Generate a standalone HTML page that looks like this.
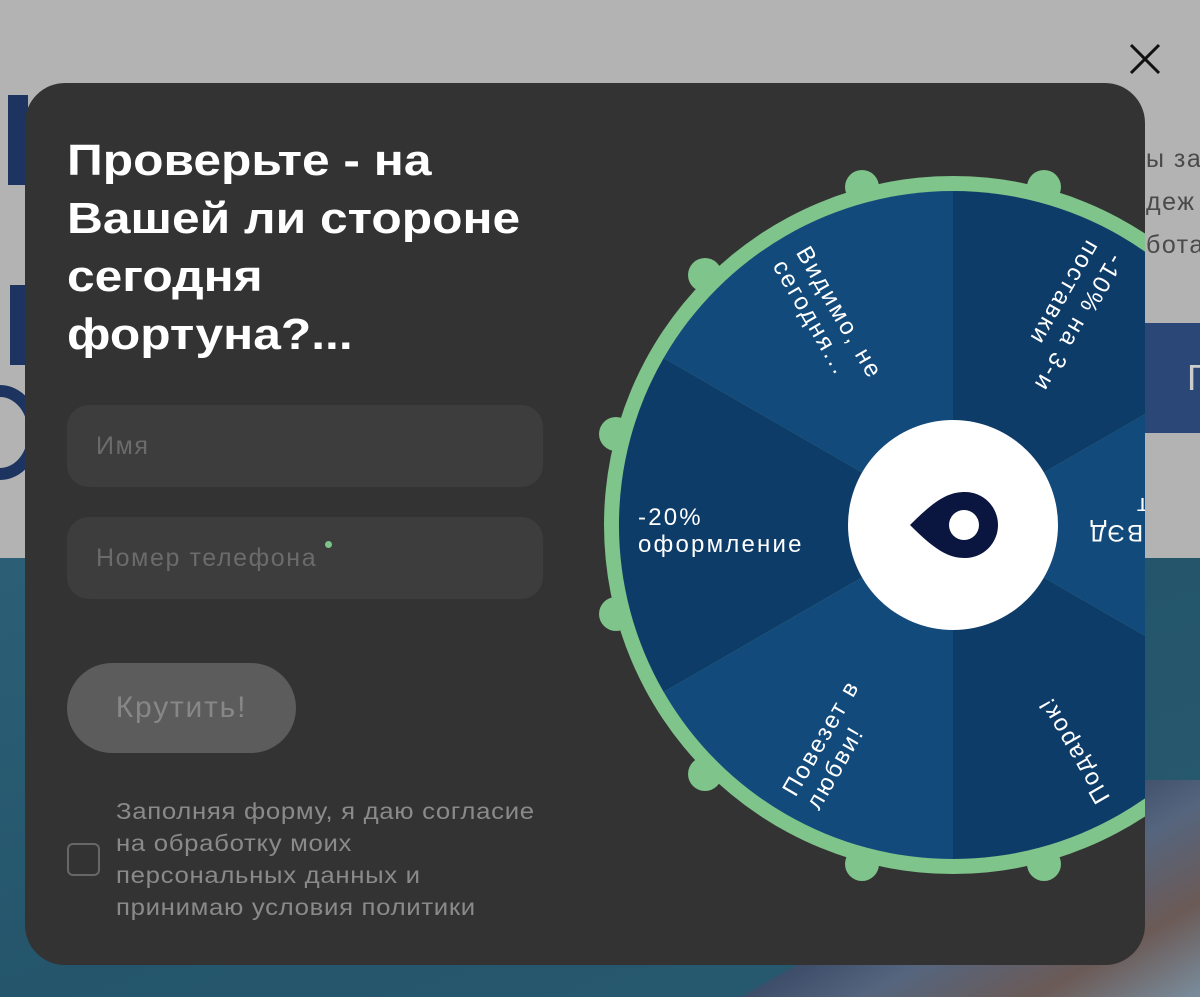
<!DOCTYPE html>
<html><head><meta charset="utf-8"><style>
html,body{margin:0;padding:0;width:1200px;height:997px;overflow:hidden;font-family:"Liberation Sans",sans-serif}
body{background:#b3b3b3;position:relative}
.ocean{position:absolute;left:0;top:558px;width:1200px;height:439px;background:linear-gradient(160deg,#2c5f76 0%,#24556b 50%,#285a70 100%)}
.ship{position:absolute;left:730px;top:780px;width:470px;height:220px;background:linear-gradient(150deg,transparent 45%,#3e4e6a 46%,#55657e 60%,#6b5a56 80%,#7a8fa0 100%)}
.modal{position:absolute;left:25px;top:83px;width:1120px;height:882px;background:#333333;border-radius:40px;overflow:hidden}
h1{position:absolute;left:42px;top:49px;margin:0;font-size:44px;line-height:58px;font-weight:bold;color:#fff;transform:scaleX(1.13);transform-origin:0 0;white-space:nowrap}
.inp{position:absolute;left:42px;width:476px;height:82px;background:#3d3d3d;border-radius:22px;color:#6b6b6b;font-size:25px;letter-spacing:1.6px;line-height:82px;padding-left:29px;box-sizing:border-box}
.btn{position:absolute;left:42px;top:580px;width:229px;height:90px;background:#5c5c5c;border-radius:45px;color:#878787;font-size:30px;letter-spacing:1.8px;line-height:90px;text-align:center}
.cb{position:absolute;left:42px;top:760px;width:33px;height:33px;border:2px solid #676767;border-radius:6px;box-sizing:border-box}
.terms{position:absolute;left:91px;top:712px;font-size:23px;letter-spacing:0.6px;line-height:32px;color:#8a8a8a;transform:scaleX(1.12);transform-origin:0 0;white-space:nowrap}
svg.wheel{position:absolute;left:-25px;top:-83px}
</style></head><body>
<div style="position:absolute;left:8px;top:95px;width:20px;height:90px;background:#1d3461"></div>
<div style="position:absolute;left:10px;top:285px;width:16px;height:80px;background:#1d3461"></div>
<div style="position:absolute;left:-40px;top:385px;width:80px;height:95px;border:12px solid #1d3461;border-radius:50%;box-sizing:border-box"></div>
<div style="position:absolute;left:1146px;top:138px;font-size:25px;letter-spacing:1.5px;line-height:43px;color:#4a4a4a">ы за<br>деж<br>бота</div>
<div style="position:absolute;left:1145px;top:323px;width:60px;height:110px;background:#2a4778;color:#ccc;font-size:36px;line-height:110px;padding-left:42px;box-sizing:border-box">Г</div>
<div class="ocean"></div>
<div class="ship"></div>
<svg style="position:absolute;left:1128px;top:42px" width="34" height="34" viewBox="0 0 34 34"><path d="M3 3L31 31M31 3L3 31" stroke="#111" stroke-width="3"/></svg>
<div class="modal">
<h1>Проверьте - на<br>Вашей ли стороне<br>сегодня<br>фортуна?...</h1>
<div class="inp" style="top:322px">Имя</div>
<div class="inp" style="top:434px">Номер телефона</div>
<div style="position:absolute;left:300px;top:458px;width:7px;height:7px;border-radius:50%;background:#7cc48a"></div>
<div class="btn">Крутить!</div>
<div class="cb"></div>
<div class="terms">Заполняя форму, я даю согласие<br>на обработку моих<br>персональных данных и<br>принимаю условия политики</div>
<svg class="wheel" width="1200" height="997" viewBox="0 0 1200 997" font-family="Liberation Sans, sans-serif">
<g fill="#7fc48a">
<circle cx="862" cy="187" r="17"/><circle cx="1044" cy="187" r="17"/>
<circle cx="705" cy="275" r="17"/><circle cx="616" cy="434" r="17"/>
<circle cx="616" cy="614" r="17"/><circle cx="705" cy="774" r="17"/>
<circle cx="862" cy="864" r="17"/><circle cx="1044" cy="864" r="17"/>
</g>
<circle cx="953" cy="525" r="349" fill="#7fc48a"/>
<path d="M953 525L953 191A334 334 0 0 0 663.7 358Z" fill="#124a7b"/>
<path d="M953 525L663.7 358A334 334 0 0 0 663.7 692Z" fill="#0e3c69"/>
<path d="M953 525L663.7 692A334 334 0 0 0 953 859Z" fill="#124a7b"/>
<path d="M953 525L953 859A334 334 0 0 0 1242.3 692Z" fill="#0e3c69"/>
<path d="M953 525L1242.3 692A334 334 0 0 0 1242.3 358Z" fill="#124a7b"/>
<path d="M953 525L1242.3 358A334 334 0 0 0 953 191Z" fill="#0e3c69"/>
<g fill="#fff" font-size="24" letter-spacing="2.2">
<g><text x="638" y="525">-20%</text><text x="638" y="552">оформление</text></g>
<g transform="rotate(60 953 525)"><text x="638" y="525">Видимо, не</text><text x="638" y="552">сегодня...</text></g>
<g transform="rotate(120 953 525)"><text x="638" y="525">-10% на 3-и</text><text x="638" y="552">поставки</text></g>
<g transform="rotate(180 953 525)"><text x="638" y="525">Аудит по ВЭД</text><text x="638" y="552">на импорт</text></g>
<g transform="rotate(240 953 525)"><text x="638" y="525">Подарок!</text></g>
<g transform="rotate(300 953 525)"><text x="638" y="525">Повезет в</text><text x="638" y="552">любви!</text></g>
</g>
<circle cx="953" cy="525" r="105" fill="#fff"/>
<path d="M910 525C935 500 948 492 965 492A33 33 0 0 1 965 558C948 558 935 550 910 525Z" fill="#0a1540"/>
<circle cx="964" cy="525" r="15" fill="#fff"/>
</svg>
</div>
</body></html>
